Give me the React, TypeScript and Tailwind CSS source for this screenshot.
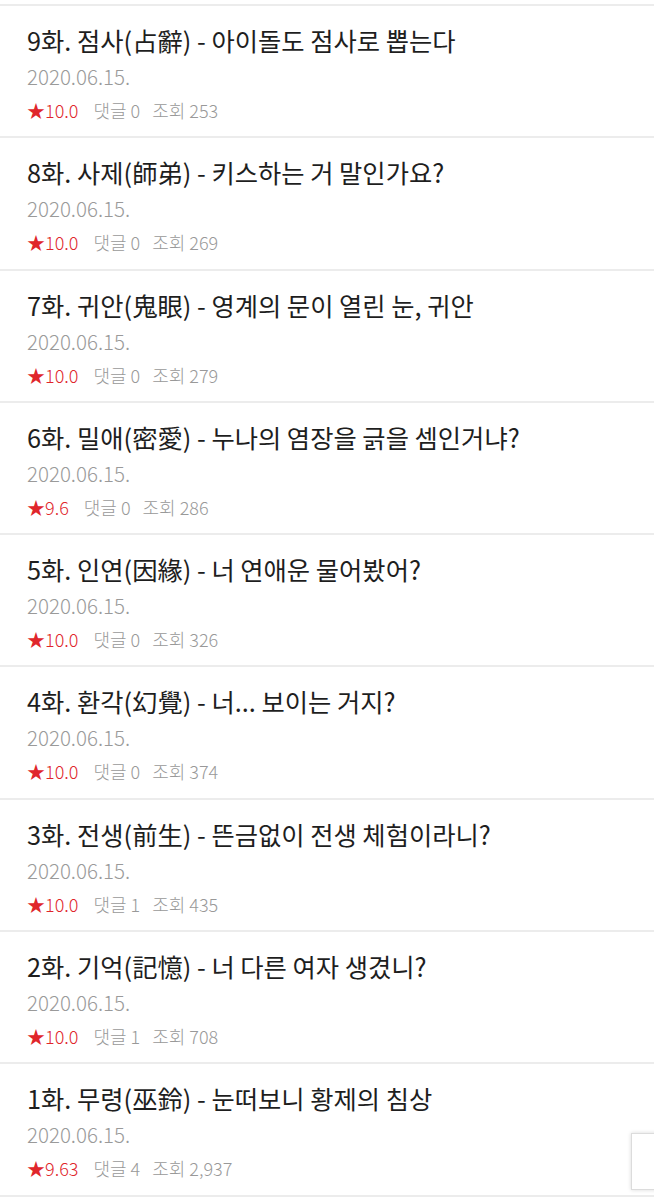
const episodes = [
  { no: 9, title: '점사(占辭) - 아이돌도 점사로 뽑는다', score: '10.0', comments: 0, views: '253' },
  { no: 8, title: '사제(師弟) - 키스하는 거 말인가요?', score: '10.0', comments: 0, views: '269' },
  { no: 7, title: '귀안(鬼眼) - 영계의 문이 열린 눈, 귀안', score: '10.0', comments: 0, views: '279' },
  { no: 6, title: '밀애(密愛) - 누나의 염장을 긁을 셈인거냐?', score: '9.6', comments: 0, views: '286' },
  { no: 5, title: '인연(因緣) - 너 연애운 물어봤어?', score: '10.0', comments: 0, views: '326' },
  { no: 4, title: '환각(幻覺) - 너... 보이는 거지?', score: '10.0', comments: 0, views: '374' },
  { no: 3, title: '전생(前生) - 뜬금없이 전생 체험이라니?', score: '10.0', comments: 1, views: '435' },
  { no: 2, title: '기억(記憶) - 너 다른 여자 생겼니?', score: '10.0', comments: 1, views: '708' },
  { no: 1, title: '무령(巫鈴) - 눈떠보니 황제의 침상', score: '9.63', comments: 4, views: '2,937' },
]

export default function App() {
  return (
    <div
      className="relative min-h-[1200px] bg-white pt-[4px]"
      style={{ fontFamily: '"Noto Sans CJK KR", "Noto Sans", sans-serif' }}
    >
      <ul className="border-b-2 border-[#ececec]">
        {episodes.map((ep) => (
          <li key={ep.no} className="border-t-2 border-[#ececec] h-[132.3px] pl-[27px] pt-[17px]">
            <div className="text-[25.3px] leading-[34px] text-[#1e1e1e]">
              {ep.no}화. {ep.title}
            </div>
            <div className="mt-[3px] text-[20.5px] leading-[32px] text-[#9a9a9a] font-light">2020.06.15.</div>
            <div className="mt-[2px] flex items-center text-[18px] leading-[32px] font-light">
              <span className="text-[#e0262b]">★{ep.score}</span>
              <span className="ml-[15px] text-[#999]">댓글 {ep.comments}</span>
              <span className="ml-[12px] text-[#999]">조회 {ep.views}</span>
            </div>
          </li>
        ))}
      </ul>
      <div className="absolute right-[-10px] top-[1133px] w-[33px] h-[57px] bg-white border border-[#dcdcdc] shadow-[0_0_4px_rgba(0,0,0,0.15)]" />
    </div>
  )
}
